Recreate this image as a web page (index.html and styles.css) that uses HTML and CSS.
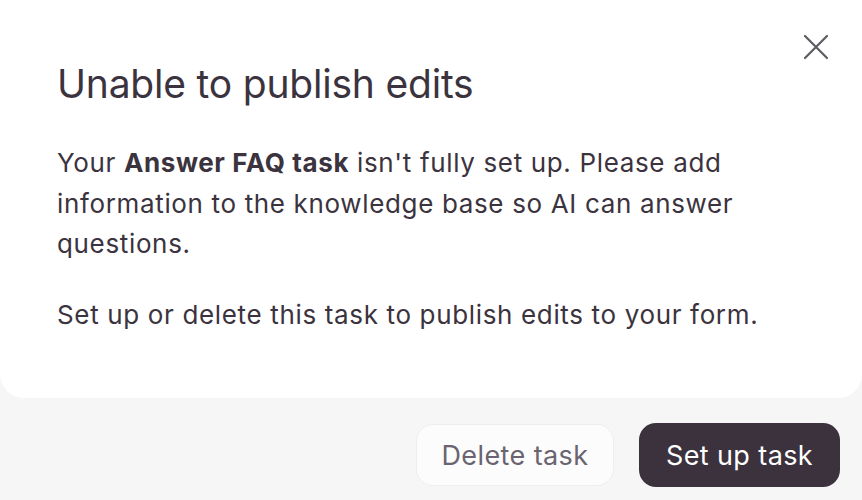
FILE: index.html
```html
<!DOCTYPE html>
<html>
<head>
<meta charset="utf-8">
<link rel="stylesheet" href="styles.css">
</head>
<body>
<div class="page">
  <div class="card">
    <button class="close" aria-label="Close">
      <svg width="28" height="28" viewBox="0 0 28 28"><path d="M3 3 L25 25 M25 3 L3 25" stroke="#5e5a62" stroke-width="2.2" stroke-linecap="round" fill="none"/></svg>
    </button>
    <h1 class="title">Unable to publish edits</h1>
    <p class="text">Your <b>Answer FAQ task</b> isn't fully set up. Please add information to the knowledge base so AI can answer questions.</p>
    <p class="text">Set up or delete this task to publish edits to your form.</p>
  </div>
  <div class="footer">
    <button class="btn btn-secondary">Delete task</button>
    <button class="btn btn-primary">Set up task</button>
  </div>
</div>
</body>
</html>
```

FILE: styles.css
```css
html, body {
  margin: 0;
  padding: 0;
  background: #f6f6f6;
  font-family: Inter, "Noto Sans", sans-serif;
  color: #3b333e;
}
.page {
  width: 862px;
  height: 500px;
  display: flex;
  flex-direction: column;
}
.card {
  position: relative;
  background: #ffffff;
  border-radius: 0 0 24px 24px;
  padding: 58px 0 0 57px;
  height: 398px;
  box-sizing: border-box;
}
.close {
  position: absolute;
  top: 33px;
  right: 32px;
  width: 28px;
  height: 28px;
  padding: 0;
  border: none;
  background: none;
  display: flex;
}
.title {
  margin: 0 0 33px 0;
  font-size: 39px;
  font-weight: 400;
  line-height: 52px;
  letter-spacing: -0.2px;
}
.text {
  margin: 0 0 30px 0;
  width: 720px;
  font-size: 26px;
  line-height: 40.5px;
  font-weight: 400;
  letter-spacing: 0.65px;
}
.text b {
  font-weight: 700;
  letter-spacing: 0.6px;
}
.footer {
  display: flex;
  justify-content: flex-end;
  align-items: center;
  gap: 25px;
  padding: 25px 22px 0 0;
}
.btn {
  font-family: Inter, "Noto Sans", sans-serif;
  font-size: 27px;
  letter-spacing: 0.4px;
  height: 62px;
  border-radius: 17px;
  padding: 0;
  cursor: pointer;
}
.btn-secondary {
  background: #fcfcfc;
  border: 1.5px solid #eeeeee;
  color: #6a6470;
  width: 198px;
}
.btn-primary {
  background: #3c323e;
  border: none;
  color: #ffffff;
  width: 201px;
  height: 64px;
}
```
